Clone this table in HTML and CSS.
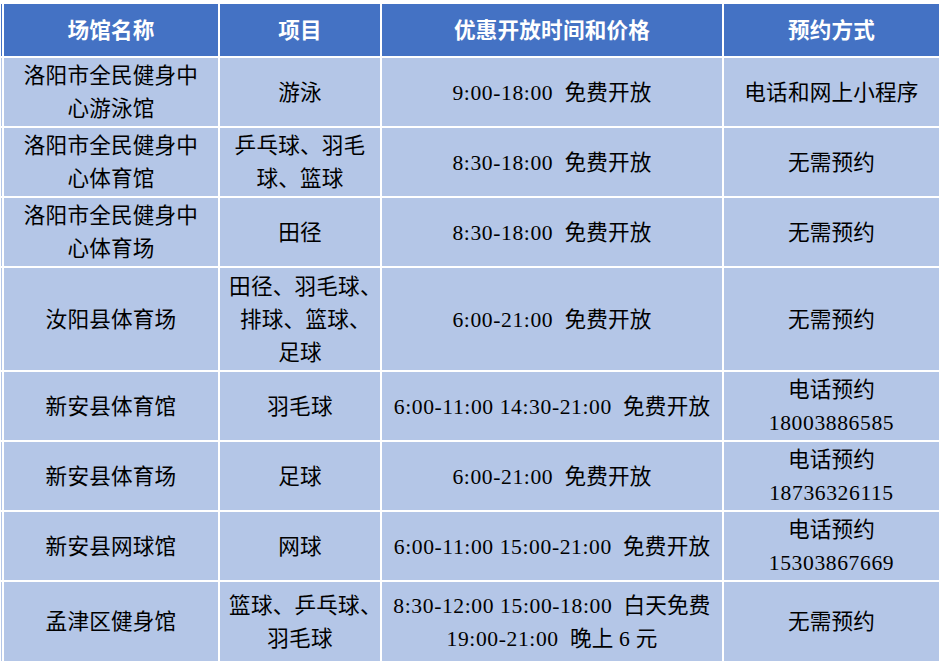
FILE: index.html
```html
<!DOCTYPE html>
<html lang="zh-CN">
<head>
<meta charset="utf-8">
<title>场馆优惠开放</title>
<link rel="stylesheet" href="styles.css">
</head>
<body>
<table class="venues">
  <colgroup>
    <col class="c-edge"><col class="c-name"><col class="c-item"><col class="c-time"><col class="c-book">
  </colgroup>
  <thead>
    <tr class="r-head">
      <th class="edge"></th><th>场馆名称</th><th>项目</th><th>优惠开放时间和价格</th><th>预约方式</th>
    </tr>
  </thead>
  <tbody>
    <tr class="r2">
      <td class="edge"></td>
      <td>洛阳市全民健身中<br>心游泳馆</td>
      <td>游泳</td>
      <td><span class="num">9:00-18:00</span>&nbsp;&nbsp;免费开放</td>
      <td>电话和网上小程序</td>
    </tr>
    <tr class="r2">
      <td class="edge"></td>
      <td>洛阳市全民健身中<br>心体育馆</td>
      <td>乒乓球、羽毛<br>球、篮球</td>
      <td><span class="num">8:30-18:00</span>&nbsp;&nbsp;免费开放</td>
      <td>无需预约</td>
    </tr>
    <tr class="r2">
      <td class="edge"></td>
      <td>洛阳市全民健身中<br>心体育场</td>
      <td>田径</td>
      <td><span class="num">8:30-18:00</span>&nbsp;&nbsp;免费开放</td>
      <td>无需预约</td>
    </tr>
    <tr class="r3">
      <td class="edge"></td>
      <td>汝阳县体育场</td>
      <td>田径、羽毛球<span class="hang">、</span><br>排球、篮球<span class="hang">、</span><br>足球</td>
      <td><span class="num">6:00-21:00</span>&nbsp;&nbsp;免费开放</td>
      <td>无需预约</td>
    </tr>
    <tr class="r2">
      <td class="edge"></td>
      <td>新安县体育馆</td>
      <td>羽毛球</td>
      <td><span class="num">6:00-11:00 14:30-21:00</span>&nbsp;&nbsp;免费开放</td>
      <td>电话预约<br><span class="num">18003886585</span></td>
    </tr>
    <tr class="r2">
      <td class="edge"></td>
      <td>新安县体育场</td>
      <td>足球</td>
      <td><span class="num">6:00-21:00</span>&nbsp;&nbsp;免费开放</td>
      <td>电话预约<br><span class="num">18736326115</span></td>
    </tr>
    <tr class="r2">
      <td class="edge"></td>
      <td>新安县网球馆</td>
      <td>网球</td>
      <td><span class="num">6:00-11:00 15:00-21:00</span>&nbsp;&nbsp;免费开放</td>
      <td>电话预约<br><span class="num">15303867669</span></td>
    </tr>
    <tr class="r-last">
      <td class="edge"></td>
      <td>孟津区健身馆</td>
      <td>篮球、乒乓球<span class="hang">、</span><br>羽毛球</td>
      <td><span class="num">8:30-12:00 15:00-18:00</span>&nbsp;&nbsp;白天免费<br><span class="num">19:00-21:00</span>&nbsp;&nbsp;晚上 6 元</td>
      <td>无需预约</td>
    </tr>
  </tbody>
</table>
</body>
</html>
```

FILE: styles.css
```css
html, body {
  margin: 0;
  padding: 0;
  background: #ffffff;
}

.venues {
  border-collapse: separate;
  border-spacing: 2px;
  table-layout: fixed;
  width: 942px;
  margin: 2px 0 0 -1px;
  font-family: "Liberation Serif", "Noto Sans CJK SC", serif;
  font-size: 21.6px;
  line-height: 33px;
  color: #000000;
}

.c-edge { width: 1px; }
.c-name { width: 214px; }
.c-item { width: 160px; }
.c-time { width: 340px; }
.c-book { width: 215px; }

.venues th,
.venues td {
  padding: 2px 0 0 0;
  text-align: center;
  vertical-align: middle;
  white-space: nowrap;
  letter-spacing: 0.2px;
}

.venues th {
  background: #4472c4;
  color: #ffffff;
  font-weight: bold;
  height: 50px;
}

.venues td {
  background: #b4c6e7;
}

.r2 td { height: 66px; }
.r3 td { height: 100px; }
.r-last td { height: 77px; }

.num {
  letter-spacing: 0.6px;
}

.hang {
  margin-right: -0.5em;
}
```
